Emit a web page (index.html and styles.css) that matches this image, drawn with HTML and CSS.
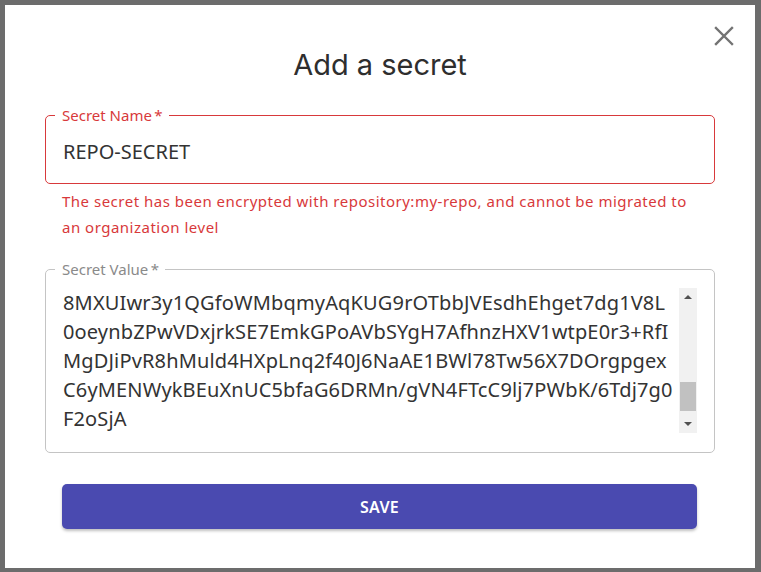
FILE: index.html
```html
<!DOCTYPE html>
<html lang="en">
<head>
<meta charset="utf-8">
<title>Add a secret</title>
<link rel="stylesheet" href="styles.css">
</head>
<body>
<div class="backdrop">
  <div class="dialog" role="dialog" aria-labelledby="dlg-title">
    <button class="close" aria-label="Close">
      <svg width="20" height="20" viewBox="0 0 20 20"><path d="M2 2 L18 18 M18 2 L2 18" stroke="#737373" stroke-width="2.4" stroke-linecap="square" fill="none"/></svg>
    </button>
    <h1 id="dlg-title" class="title">Add a secret</h1>

    <fieldset class="field field-error">
      <legend class="legend">Secret Name&thinsp;*</legend>
      <div class="field-value">REPO-SECRET</div>
    </fieldset>
    <p class="error-text">The secret has been encrypted with repository:my-repo, and cannot be migrated to an organization level</p>

    <fieldset class="field field-area">
      <legend class="legend">Secret Value&thinsp;*</legend>
      <div class="area">
        <div class="area-text">8MXUIwr3y1QGfoWMbqmyAqKUG9rOTbbJVEsdhEhget7dg1V8L<br>0oeynbZPwVDxjrkSE7EmkGPoAVbSYgH7AfhnzHXV1wtpE0r3+RfI<br>MgDJiPvR8hMuld4HXpLnq2f40J6NaAE1BWl78Tw56X7DOrgpgex<br>C6yMENWykBEuXnUC5bfaG6DRMn/gVN4FTcC9lj7PWbK/6Tdj7g0<br>F2oSjA</div>
        <div class="scrollbar">
          <span class="arrow arrow-up"></span>
          <span class="track"><span class="thumb"></span></span>
          <span class="arrow arrow-down"></span>
        </div>
      </div>
    </fieldset>

    <button class="save">SAVE</button>
  </div>
</div>
</body>
</html>
```

FILE: styles.css
```css
html, body {
  margin: 0;
  padding: 0;
}
body {
  background: #6c6c6c;
  font-family: "Noto Sans", "Open Sans", sans-serif;
  width: 761px;
  height: 572px;
  overflow: hidden;
}
.backdrop {
  padding: 5px 6px 4px 5px;
}
.dialog {
  position: relative;
  box-sizing: border-box;
  width: 750px;
  height: 563px;
  background: #fff;
  padding: 42px 40px 0 40px;
  display: flex;
  flex-direction: column;
}
.close {
  position: absolute;
  top: 21px;
  right: 21px;
  width: 20px;
  height: 20px;
  padding: 0;
  border: 0;
  background: none;
  display: flex;
  cursor: pointer;
}
.title {
  margin: 0;
  text-align: center;
  font-family: "Inter", "Noto Sans", sans-serif;
  font-weight: 400;
  font-size: 29px;
  line-height: 36px;
  color: #2e2e2e;
}
.field {
  margin: 23px 0 0 0;
  padding: 0 9px;
  border: 1px solid #c4c4c4;
  border-radius: 5px;
  min-width: 0;
}
.legend {
  padding: 0 6px 0 7px;
  font-size: 15px;
  line-height: 18px;
  color: #8a8a8a;
}
.field-error {
  border-color: #d8393b;
}
.field-error .legend {
  color: #d8393b;
}
.field-value {
  padding: 15px 8px 18px;
  font-size: 20px;
  line-height: 26px;
  color: #333;
}
.error-text {
  margin: 4px 0 0 0;
  padding: 0 17px;
  font-size: 15px;
  line-height: 26px;
  letter-spacing: 0.5px;
  color: #d8393b;
}
.field-area {
  margin-top: 20px;
}
.area {
  display: flex;
  margin: 10px 8px 19px 8px;
  height: 145px;
}
.area-text {
  flex: 1;
  font-size: 20px;
  line-height: 29px;
  letter-spacing: 0.15px;
  color: #333;
  white-space: nowrap;
  overflow: hidden;
}
.scrollbar {
  width: 18px;
  background: #f1f1f1;
  display: flex;
  flex-direction: column;
  align-items: center;
}
.arrow {
  height: 18px;
  display: flex;
  align-items: center;
  justify-content: center;
}
.arrow::before {
  content: "";
  border-left: 4px solid transparent;
  border-right: 4px solid transparent;
}
.arrow-up::before {
  border-bottom: 4px solid #505050;
}
.arrow-down::before {
  border-top: 4px solid #505050;
}
.track {
  flex: 1;
  width: 16px;
  display: flex;
  flex-direction: column;
  justify-content: flex-end;
  padding-bottom: 4px;
}
.thumb {
  height: 29px;
  background: #c1c1c1;
}
.save {
  margin: 31px 18px 0 17px;
  height: 45px;
  border: 0;
  border-radius: 5px;
  background: #4a4ab0;
  color: #fff;
  font-family: "Noto Sans", "Open Sans", sans-serif;
  font-weight: 600;
  font-size: 16px;
  letter-spacing: 0.3px;
  box-shadow: 0 2px 3px rgba(0, 0, 0, 0.25);
  cursor: pointer;
}
```
